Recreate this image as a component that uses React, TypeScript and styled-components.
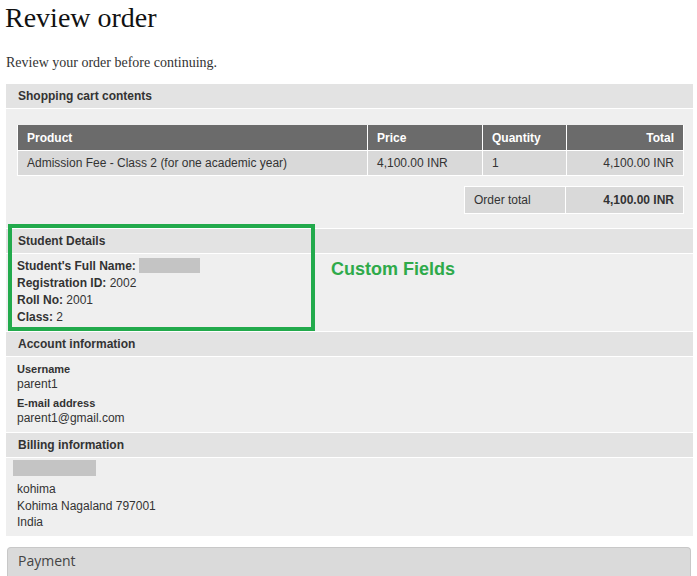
import styled, { createGlobalStyle } from "styled-components";

const GlobalStyle = createGlobalStyle`
  body {
    margin: 0;
    background: #fff;
    font-family: "Liberation Sans", Arial, sans-serif;
    font-size: 12px;
    color: #333;
  }
`;

const Page = styled.div`
  position: relative;
  width: 697px;
  height: 576px;
  overflow: hidden;
`;

const Title = styled.h1`
  margin: 0;
  padding-left: 5px;
  font-family: "Liberation Serif", Georgia, serif;
  font-weight: normal;
  font-size: 28px;
  line-height: 36px;
  color: #111;
`;

const Intro = styled.p`
  margin: 18px 0 12px;
  padding-left: 6px;
  font-family: "Liberation Serif", Georgia, serif;
  font-size: 14px;
  line-height: 18px;
  color: #333;
`;

const Panel = styled.div`
  position: relative;
  margin-left: 6px;
  width: 687px;
  background: #efefef;
`;

const SectionHeader = styled.div`
  height: 24px;
  line-height: 24px;
  padding-left: 12px;
  background: #e3e3e3;
  font-weight: bold;
  font-size: 12px;
  color: #333;
  border-top: 1px solid #fff;
  border-bottom: 1px solid #fff;
  &:first-child {
    border-top: none;
  }
`;

const CartBody = styled.div`
  padding: 16px 9px 14px 11px;
  display: flex;
  flex-direction: column;
  align-items: flex-end;
  gap: 10px;
`;

const Table = styled.table`
  border-collapse: collapse;
  table-layout: fixed;
  width: 667px;
  font-size: 12px;
`;

const Th = styled.th<{ $w?: number; $right?: boolean }>`
  width: ${({ $w }) => ($w ? `${$w}px` : "auto")};
  height: 25px;
  padding: 0 9px;
  background: #6b6b6b;
  color: #fff;
  font-weight: bold;
  text-align: ${({ $right }) => ($right ? "right" : "left")};
  border: 1px solid #fff;
  border-top: none;
`;

const Td = styled.td<{ $right?: boolean; $bold?: boolean; $h?: number; $w?: number }>`
  width: ${({ $w }) => ($w ? `${$w}px` : "auto")};
  height: ${({ $h }) => $h ?? 24}px;
  padding: 0 9px;
  background: #d9d9d9;
  color: #333;
  font-weight: ${({ $bold }) => ($bold ? "bold" : "normal")};
  text-align: ${({ $right }) => ($right ? "right" : "left")};
  border: 1px solid #fff;
`;

const TotalTable = styled.table`
  border-collapse: collapse;
  table-layout: fixed;
  width: 220px;
  font-size: 12px;
`;

const Fields = styled.div<{ $pad?: string }>`
  padding: ${({ $pad }) => $pad || "4px 11px 5px"};
  line-height: 17px;
  color: #333;
`;

const Line = styled.div``;

const Label = styled.span`
  font-weight: bold;
`;

const SmallLabel = styled.div<{ $gap?: number }>`
  font-weight: bold;
  font-size: 11px;
  line-height: 14px;
  margin-top: ${({ $gap }) => $gap ?? 0}px;
`;

const Value = styled.div<{ $lh?: number }>`
  line-height: ${({ $lh }) => $lh ?? 16}px;
`;

const Redacted = styled.span<{ $w: number }>`
  display: inline-block;
  width: ${({ $w }) => $w}px;
  height: 15px;
  background: #c4c4c4;
  vertical-align: -3px;
`;

const RedactedBlock = styled.div`
  width: 83px;
  height: 16px;
  margin: 0 0 5px -4px;
  background: #c4c4c4;
`;

const Highlight = styled.div`
  position: absolute;
  left: 2px;
  top: 140px;
  width: 299px;
  height: 99px;
  border: 4px solid #22aa4c;
  pointer-events: none;
`;

const Annotation = styled.div`
  position: absolute;
  left: 325px;
  top: 175px;
  font-weight: bold;
  font-size: 18px;
  color: #2eaa4a;
`;

const Payment = styled.div`
  margin: 11px 0 0 7px;
  width: 684px;
  height: 40px;
  box-sizing: border-box;
  padding: 3px 10px;
  background: #dadada;
  border: 1px solid #c8c8c8;
  border-bottom: none;
  border-radius: 4px 4px 0 0;
  font-family: "Open Sans", "Liberation Sans", sans-serif;
  font-size: 14px;
  line-height: 19px;
  color: #444;
`;

export default function App() {
  return (
    <Page>
      <GlobalStyle />
      <Title>Review order</Title>
      <Intro>Review your order before continuing.</Intro>
      <Panel>
        <SectionHeader>Shopping cart contents</SectionHeader>
        <CartBody>
          <Table>
            <thead>
              <tr>
                <Th>Product</Th>
                <Th $w={96}>Price</Th>
                <Th $w={65}>Quantity</Th>
                <Th $w={98} $right>
                  Total
                </Th>
              </tr>
            </thead>
            <tbody>
              <tr>
                <Td>Admission Fee - Class 2 (for one academic year)</Td>
                <Td>4,100.00 INR</Td>
                <Td>1</Td>
                <Td $right>4,100.00 INR</Td>
              </tr>
            </tbody>
          </Table>
          <TotalTable>
            <tbody>
              <tr>
                <Td $h={26}>Order total</Td>
                <Td $h={26} $w={99} $right $bold>
                  4,100.00 INR
                </Td>
              </tr>
            </tbody>
          </TotalTable>
        </CartBody>

        <SectionHeader>Student Details</SectionHeader>
        <Fields>
          <Line>
            <Label>Student's Full Name:</Label> <Redacted $w={61} />
          </Line>
          <Line>
            <Label>Registration ID:</Label> 2002
          </Line>
          <Line>
            <Label>Roll No:</Label> 2001
          </Line>
          <Line>
            <Label>Class:</Label> 2
          </Line>
        </Fields>

        <SectionHeader>Account information</SectionHeader>
        <Fields $pad="5px 11px 6px">
          <SmallLabel>Username</SmallLabel>
          <Value>parent1</Value>
          <SmallLabel $gap={4}>E-mail address</SmallLabel>
          <Value>parent1@gmail.com</Value>
        </Fields>

        <SectionHeader>Billing information</SectionHeader>
        <Fields $pad="2px 11px 5px">
          <RedactedBlock />
          <Value $lh={16.5}>kohima</Value>
          <Value $lh={16.5}>Kohima Nagaland 797001</Value>
          <Value $lh={16.5}>India</Value>
        </Fields>

        <Highlight />
        <Annotation>Custom Fields</Annotation>
      </Panel>
      <Payment>Payment</Payment>
    </Page>
  );
}
